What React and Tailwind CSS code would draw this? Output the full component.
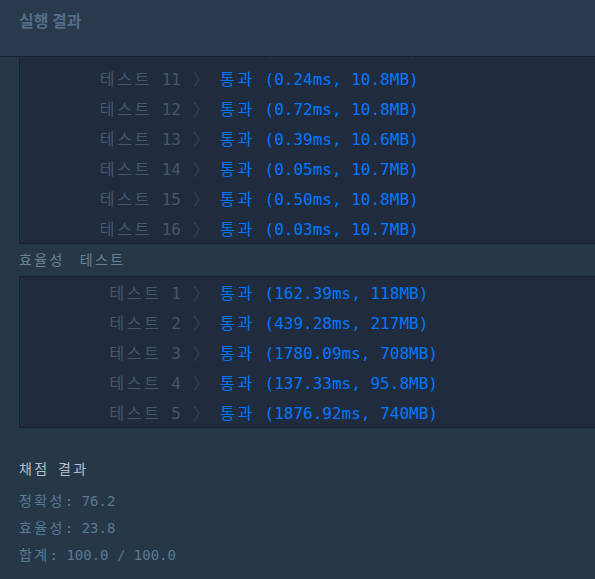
import React from "react";

const mono = "font-['DejaVu_Sans_Mono','Noto_Sans_CJK_KR',monospace]";

function K({ children }) {
  return <span className="tracking-[0.17em]">{children}</span>;
}

function Row({ n, ms, mb }) {
  return (
    <div className="flex h-[30px] items-center whitespace-pre pt-[3px] text-[16px]">
      <div className="w-[161px] shrink-0 text-right text-[#44576c]">
        <K>테스트</K> {n}
      </div>
      <div className="w-[39px] shrink-0 pl-[12px] text-[#34465a]">〉</div>
      <div className="text-[#0078ff]">
        <K>통과</K> ({ms}, {mb})
      </div>
    </div>
  );
}

const t1 = [
  [10, "0.02ms", "10.6MB"],
  [11, "0.24ms", "10.8MB"],
  [12, "0.72ms", "10.8MB"],
  [13, "0.39ms", "10.6MB"],
  [14, "0.05ms", "10.7MB"],
  [15, "0.50ms", "10.8MB"],
  [16, "0.03ms", "10.7MB"],
];

const t2 = [
  [1, "162.39ms", "118MB"],
  [2, "439.28ms", "217MB"],
  [3, "1780.09ms", "708MB"],
  [4, "137.33ms", "95.8MB"],
  [5, "1876.92ms", "740MB"],
];

export default function App() {
  return (
    <div className={`flex h-[579px] w-[595px] flex-col overflow-hidden bg-[#263747] ${mono}`}>
      <div className="h-[57px] shrink-0 border-b border-[#172334] bg-[#283a4b] px-[19px] pt-[8px]">
        <h3 className="font-['Noto_Sans_CJK_KR',sans-serif] text-[16px] font-bold leading-[24px] text-[#536e88]">
          실행 결과
        </h3>
      </div>
      <div className="flex-1 overflow-hidden">
        <div className="-mt-[25px] pl-[19px]">
          <div className="border-y border-l border-[#172334] bg-[#202b3d]">
            {t1.map(([n, ms, mb]) => (
              <Row key={n} n={n} ms={ms} mb={mb} />
            ))}
          </div>
          <div className="flex h-[32px] items-center gap-[15px] pt-[1px] text-[14px] text-[#6a8196]">
            <K>효율성</K>
            <K>테스트</K>
          </div>
          <div className="border-y border-l border-[#172334] bg-[#202b3d]">
            {t2.map(([n, ms, mb]) => (
              <Row key={n} n={n} ms={ms} mb={mb} />
            ))}
          </div>
          <div className="mt-[31px] text-[14px] leading-[20px] text-[#b2c0cc]">
            <K>채점</K> <K>결과</K>
          </div>
          <div className="mt-[9px] whitespace-pre text-[14px] leading-[27px] text-[#587a94]">
            <div>
              <K>정확성</K>: 76.2
            </div>
            <div>
              <K>효율성</K>: 23.8
            </div>
            <div>
              <K>합계</K>: 100.0 / 100.0
            </div>
          </div>
        </div>
      </div>
    </div>
  );
}
